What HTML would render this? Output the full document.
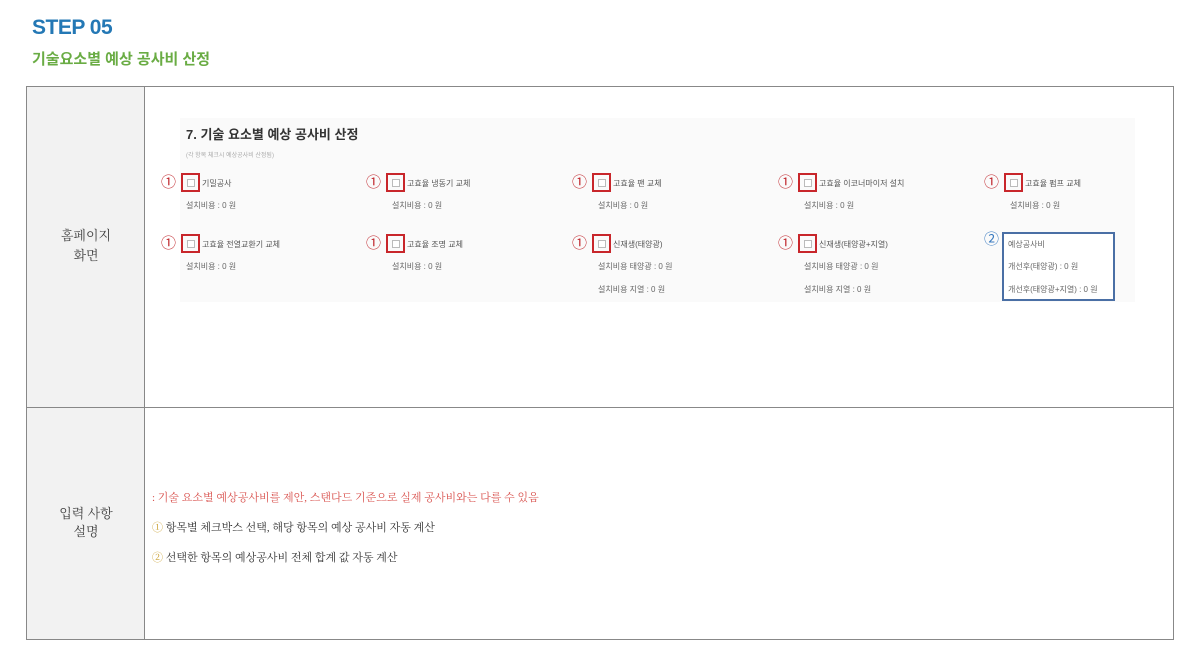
<!DOCTYPE html>
<html><head><meta charset="utf-8"><style>
*{margin:0;padding:0;box-sizing:border-box}
body{width:1200px;height:664px;background:#fff;position:relative;overflow:hidden;font-family:"Liberation Sans","Noto Sans CJK KR",sans-serif}
.a{position:absolute;white-space:nowrap}
.serif{font-family:"Liberation Serif","Noto Serif CJK SC",serif}
.n{position:absolute;font-size:15px;color:#c0272d;line-height:16px}
.cb{position:absolute;width:19px;height:19px;border:2px solid #c8262b}
.cb i{position:absolute;left:4px;top:4px;width:8px;height:8px;border:1px solid #bbb;background:#fff}
.l{position:absolute;font-size:8px;color:#555;line-height:10px}
.s{position:absolute;font-size:8px;color:#666;line-height:10px}
</style></head><body>
<div class="a" style="left:32px;top:16px;font-size:21px;font-weight:bold;color:#2478b5;letter-spacing:-0.5px">STEP 05</div>
<div class="a" style="left:32px;top:48px;font-size:15px;font-weight:bold;color:#6aac44">기술요소별 예상 공사비 산정</div>

<div class="a" style="left:26px;top:86px;width:1148px;height:554px;border:1px solid #888"></div>
<div class="a" style="left:27px;top:87px;width:118px;height:552px;background:#f2f2f2;border-right:1px solid #888"></div>
<div class="a" style="left:27px;top:407px;width:1146px;height:1px;background:#888"></div>

<div class="a serif" style="left:27px;top:226px;width:118px;text-align:center;font-size:13px;color:#444;line-height:20px">홈페이지<br>화면</div>
<div class="a serif" style="left:27px;top:505px;width:118px;text-align:center;font-size:13px;color:#444;line-height:18px">입력 사항<br>설명</div>

<div class="a" style="left:180px;top:118px;width:955px;height:184px;background:#fafafa"></div>
<div class="a" style="left:186px;top:124px;font-size:13px;font-weight:bold;color:#333">7. 기술 요소별 예상 공사비 산정</div>
<div class="a" style="left:186px;top:150px;font-size:6px;color:#aaa">(각 항목 체크시 예상공사비 산정됨)</div>

<!-- row 1 -->
<div class="n" style="left:161px;top:175px">①</div><div class="cb" style="left:181px;top:173px"><i></i></div><div class="l" style="left:202px;top:179px">기밀공사</div><div class="s" style="left:186px;top:201px">설치비용 : 0 원</div>
<div class="n" style="left:366px;top:175px">①</div><div class="cb" style="left:386px;top:173px"><i></i></div><div class="l" style="left:407px;top:179px">고효율 냉동기 교체</div><div class="s" style="left:392px;top:201px">설치비용 : 0 원</div>
<div class="n" style="left:572px;top:175px">①</div><div class="cb" style="left:592px;top:173px"><i></i></div><div class="l" style="left:613px;top:179px">고효율 팬 교체</div><div class="s" style="left:598px;top:201px">설치비용 : 0 원</div>
<div class="n" style="left:778px;top:175px">①</div><div class="cb" style="left:798px;top:173px"><i></i></div><div class="l" style="left:819px;top:179px">고효율 이코너마이저 설치</div><div class="s" style="left:804px;top:201px">설치비용 : 0 원</div>
<div class="n" style="left:984px;top:175px">①</div><div class="cb" style="left:1004px;top:173px"><i></i></div><div class="l" style="left:1025px;top:179px">고효율 펌프 교체</div><div class="s" style="left:1010px;top:201px">설치비용 : 0 원</div>

<!-- row 2 -->
<div class="n" style="left:161px;top:236px">①</div><div class="cb" style="left:181px;top:234px"><i></i></div><div class="l" style="left:202px;top:240px">고효율 전열교환기 교체</div><div class="s" style="left:186px;top:262px">설치비용 : 0 원</div>
<div class="n" style="left:366px;top:236px">①</div><div class="cb" style="left:386px;top:234px"><i></i></div><div class="l" style="left:407px;top:240px">고효율 조명 교체</div><div class="s" style="left:392px;top:262px">설치비용 : 0 원</div>
<div class="n" style="left:572px;top:236px">①</div><div class="cb" style="left:592px;top:234px"><i></i></div><div class="l" style="left:613px;top:240px">신재생(태양광)</div><div class="s" style="left:598px;top:262px">설치비용 태양광 : 0 원</div><div class="s" style="left:598px;top:285px">설치비용 지열 : 0 원</div>
<div class="n" style="left:778px;top:236px">①</div><div class="cb" style="left:798px;top:234px"><i></i></div><div class="l" style="left:819px;top:240px">신재생(태양광+지열)</div><div class="s" style="left:804px;top:262px">설치비용 태양광 : 0 원</div><div class="s" style="left:804px;top:285px">설치비용 지열 : 0 원</div>
<div class="n" style="left:984px;top:232px;color:#3a7bc0">②</div>
<div class="a" style="left:1002px;top:232px;width:113px;height:69px;border:2px solid #4a6fa5;background:#fff"></div>
<div class="s" style="left:1008px;top:240px">예상공사비</div>
<div class="s" style="left:1008px;top:262px">개선후(태양광) : 0 원</div>
<div class="s" style="left:1008px;top:285px">개선후(태양광+지열) : 0 원</div>

<div class="a serif" style="left:152px;top:489px;font-size:11px;color:#d9534f">: 기술 요소별 예상공사비를 제안, 스탠다드 기준으로 실제 공사비와는 다를 수 있음</div>
<div class="a serif" style="left:152px;top:519px;font-size:11px;color:#333"><span style="color:#c9a030">①</span> 항목별 체크박스 선택, 해당 항목의 예상 공사비 자동 계산</div>
<div class="a serif" style="left:152px;top:549px;font-size:11px;color:#333"><span style="color:#c9a030">②</span> 선택한 항목의 예상공사비 전체 합계 값 자동 계산</div>
</body></html>
